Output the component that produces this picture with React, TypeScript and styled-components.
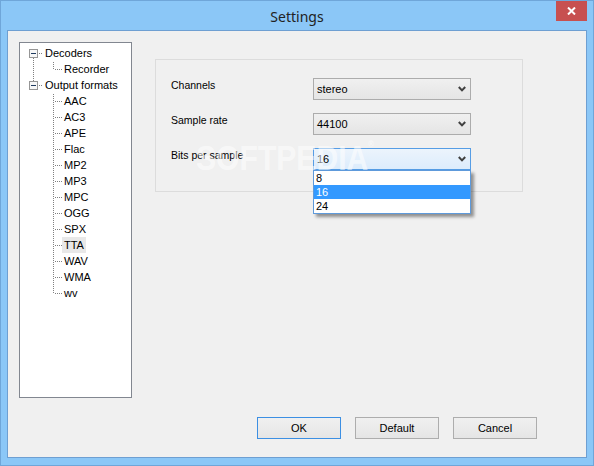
import React from 'react';
import styled, { createGlobalStyle } from 'styled-components';

const GlobalStyle = createGlobalStyle`
  body {
    margin: 0;
    background: #ffffff;
    font-family: "Liberation Sans", Arial, sans-serif;
  }
`;

const Window = styled.div`
  width: 594px;
  height: 466px;
  box-sizing: border-box;
  border: 1px solid #6fa6d9;
  background: #8bc7f7;
  display: flex;
  flex-direction: column;
`;

const TitleBar = styled.div`
  height: 29px;
  display: grid;
  grid-template-columns: 1fr auto 1fr;
  align-items: center;
`;

const Title = styled.div`
  grid-column: 2;
  font-family: "Noto Sans", "Open Sans", sans-serif;
  font-size: 14px;
  color: #222222;
  padding-top: 2px;
`;

const CloseButton = styled.div`
  grid-column: 3;
  justify-self: end;
  align-self: start;
  margin-right: 6px;
  width: 31px;
  height: 20px;
  background: #c75050;
  display: flex;
  align-items: center;
  justify-content: center;
`;

const Client = styled.div`
  position: relative;
  flex: 1;
  margin: 0 6px 7px;
  border: 1px solid #6e9fd2;
  background: #f0f0f0;
  padding: 11px;
  display: flex;
  flex-direction: column;
  font-size: 11px;
  color: #000000;
`;

const Top = styled.div`
  display: flex;
  align-items: flex-start;
  gap: 23px;
`;

const Tree = styled.div`
  width: 113px;
  height: 356px;
  box-sizing: border-box;
  border: 1px solid #828790;
  background: #ffffff;
  padding-top: 2px;
`;

const TreeRow = styled.div`
  display: flex;
  height: 16px;
  align-items: center;
`;

const TreeLabel = styled.span<{ $selected?: boolean }>`
  line-height: 16px;
  padding: 0 2px;
  white-space: nowrap;
  background: ${(p) => (p.$selected ? '#e8e8e8' : 'transparent')};
`;

const Group = styled.div`
  margin-top: 17px;
  width: 368px;
  box-sizing: border-box;
  border: 1px solid #dcdcdc;
  padding: 18px 0 21px 15px;
  display: grid;
  grid-template-columns: 142px 158px;
  row-gap: 13px;
`;

const FieldLabel = styled.div`
  font-size: 10.5px;
  line-height: 14px;
  align-self: start;
`;

const ComboWrap = styled.div`
  position: relative;
`;

const Combo = styled.div<{ $focused?: boolean }>`
  width: 158px;
  height: 22px;
  box-sizing: border-box;
  border: 1px solid ${(p) => (p.$focused ? '#569de5' : '#acacac')};
  background: ${(p) =>
    p.$focused
      ? 'linear-gradient(#ecf4fc, #dcecfc)'
      : 'linear-gradient(#f0f0f0, #e5e5e5)'};
  display: flex;
  align-items: center;
  justify-content: space-between;
  padding: 0 4px 0 3px;
  font-size: 11px;
`;

const DropList = styled.div`
  position: absolute;
  top: 100%;
  left: 0;
  width: 158px;
  box-sizing: border-box;
  border: 1px solid #5e9adb;
  background: #ffffff;
  box-shadow: 3px 3px 3px rgba(0, 0, 0, 0.4);
  z-index: 2;
`;

const Option = styled.div<{ $selected?: boolean }>`
  height: 14px;
  line-height: 14px;
  padding-left: 2px;
  background: ${(p) => (p.$selected ? '#3399ff' : 'transparent')};
  color: ${(p) => (p.$selected ? '#ffffff' : '#000000')};
`;

const Buttons = styled.div`
  display: flex;
  justify-content: flex-end;
  gap: 14px;
  margin-top: 19px;
  padding-right: 38px;
`;

const Button = styled.div<{ $default?: boolean }>`
  width: 84px;
  height: 22px;
  box-sizing: border-box;
  border: 1px solid ${(p) => (p.$default ? '#3c8fe3' : '#adadad')};
  background: linear-gradient(#f0f0f0, #e5e5e5);
  display: flex;
  align-items: center;
  justify-content: center;
  font-size: 11px;
`;

const Watermark = styled.div`
  position: absolute;
  left: 188px;
  top: 109px;
  font-size: 35px;
  font-weight: bold;
  line-height: 1;
  color: rgba(255, 255, 255, 0.55);
  transform: scaleX(0.86);
  transform-origin: left top;
  pointer-events: none;
  sup {
    font-size: 9px;
    vertical-align: top;
  }
`;

type Node = {
  label: string;
  level: 0 | 1;
  first?: boolean;
  hasNext?: boolean;
  parentHasNext?: boolean;
  last?: boolean;
  selected?: boolean;
};

const formats = ['AAC', 'AC3', 'APE', 'Flac', 'MP2', 'MP3', 'MPC', 'OGG', 'SPX', 'TTA', 'WAV', 'WMA', 'wv'];

const nodes: Node[] = [
  { label: 'Decoders', level: 0, first: true, hasNext: true },
  { label: 'Recorder', level: 1, parentHasNext: true, last: true },
  { label: 'Output formats', level: 0 },
  ...formats.map((f, i) => ({
    label: f,
    level: 1 as const,
    last: i === formats.length - 1,
    selected: f === 'TTA',
  })),
];

const DOT = '#808080';

// dotted connector pieces, one pixel every other pixel
const vDots = (x: number, y0: number, y1: number) => {
  const out = [];
  for (let y = y0; y <= y1; y += 2) out.push(<rect key={`v${x}-${y}`} x={x} y={y} width={1} height={1} fill={DOT} />);
  return out;
};
const hDots = (y: number, x0: number, x1: number) => {
  const out = [];
  for (let x = x0; x <= x1; x += 2) out.push(<rect key={`h${y}-${x}`} x={x} y={y} width={1} height={1} fill={DOT} />);
  return out;
};

const Gutter = ({ node }: { node: Node }) => {
  if (node.level === 0) {
    return (
      <svg width={23} height={16} shapeRendering="crispEdges">
        {!node.first && vDots(13, 1, 3)}
        {node.hasNext && vDots(13, 13, 15)}
        <rect x={9.5} y={4.5} width={8} height={8} fill="#f7f7f7" stroke="#969696" />
        <rect x={11} y={8} width={5} height={1} fill="#1e3a5f" />
        {hDots(8, 19, 21)}
      </svg>
    );
  }
  return (
    <svg width={42} height={16} shapeRendering="crispEdges">
      {node.parentHasNext && vDots(13, 1, 15)}
      {vDots(33, 1, node.last ? 7 : 15)}
      {hDots(8, 35, 41)}
    </svg>
  );
};

const Chevron = () => (
  <svg width={8} height={6} viewBox="0 0 8 6">
    <path d="M0.8 1 L4 4.4 L7.2 1" fill="none" stroke="#404040" strokeWidth={2} />
  </svg>
);

const CloseGlyph = () => (
  <svg width={9} height={8} viewBox="0 0 9 8">
    <path d="M1 0.5 L8 7.5 M8 0.5 L1 7.5" stroke="#ffffff" strokeWidth={2} />
  </svg>
);

export default function App() {
  return (
    <>
      <GlobalStyle />
      <Window>
        <TitleBar>
          <Title>Settings</Title>
          <CloseButton>
            <CloseGlyph />
          </CloseButton>
        </TitleBar>
        <Client>
          <Top>
            <Tree>
              {nodes.map((n) => (
                <TreeRow key={n.label}>
                  <Gutter node={n} />
                  <TreeLabel $selected={n.selected}>{n.label}</TreeLabel>
                </TreeRow>
              ))}
            </Tree>
            <Group>
              <FieldLabel>Channels</FieldLabel>
              <ComboWrap>
                <Combo>
                  stereo
                  <Chevron />
                </Combo>
              </ComboWrap>
              <FieldLabel>Sample rate</FieldLabel>
              <ComboWrap>
                <Combo>
                  44100
                  <Chevron />
                </Combo>
              </ComboWrap>
              <FieldLabel>Bits per sample</FieldLabel>
              <ComboWrap>
                <Combo $focused>
                  16
                  <Chevron />
                </Combo>
                <DropList>
                  <Option>8</Option>
                  <Option $selected>16</Option>
                  <Option>24</Option>
                </DropList>
              </ComboWrap>
            </Group>
          </Top>
          <Buttons>
            <Button $default>OK</Button>
            <Button>Default</Button>
            <Button>Cancel</Button>
          </Buttons>
          <Watermark>
            SOFTPEDIA<sup>®</sup>
          </Watermark>
        </Client>
      </Window>
    </>
  );
}
